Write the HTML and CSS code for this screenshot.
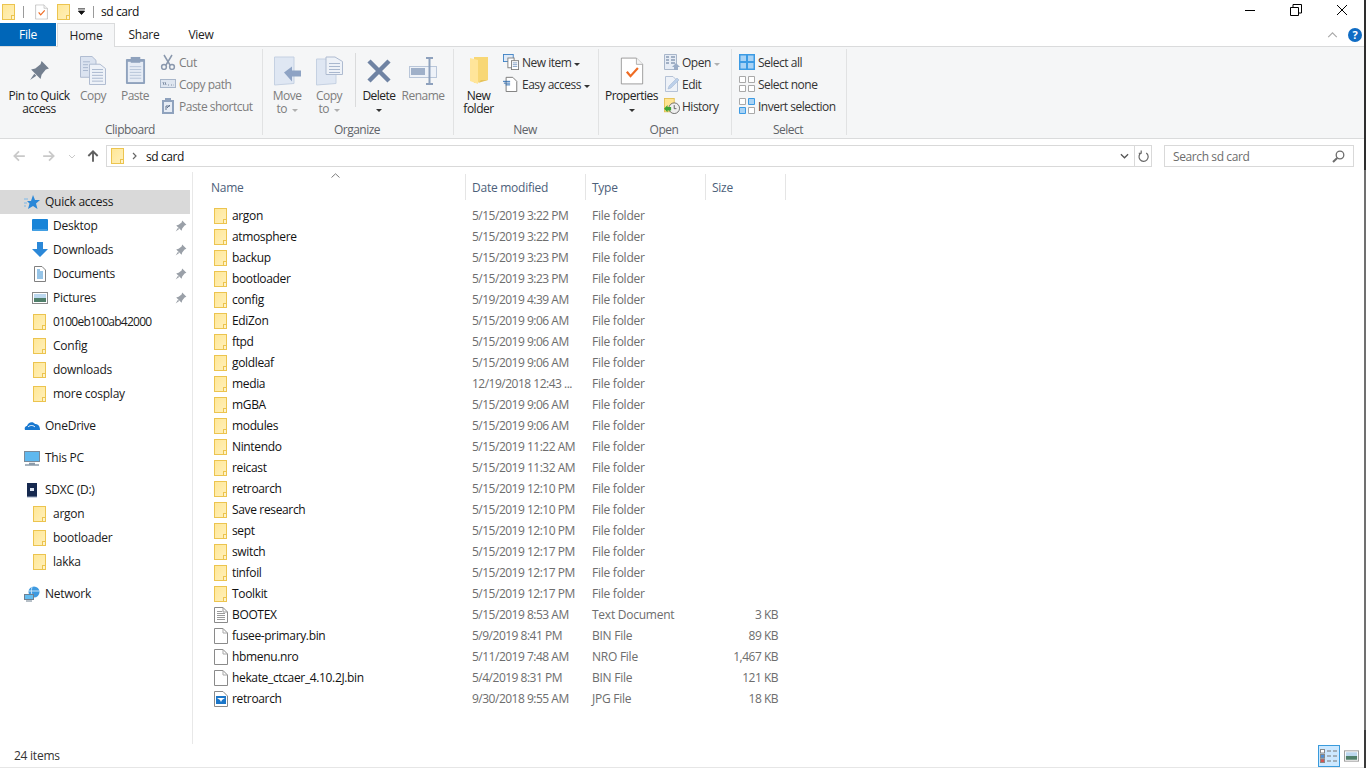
FILE: index.html
```html
<!DOCTYPE html>
<html lang="en">
<head>
<meta charset="utf-8">
<title>sd card</title>
<link rel="stylesheet" href="styles.css">
</head>
<body>
<svg class="defs" width="0" height="0" aria-hidden="true">
  <linearGradient id="fg" x1="0" y1="0" x2="1" y2="1">
    <stop offset="0" stop-color="#ffe796"/>
    <stop offset="1" stop-color="#fff0bc"/>
  </linearGradient>
  <symbol id="folder" viewBox="0 0 16 16">
    <rect x="1.500" y="0.500" width="12" height="15" fill="url(#fg)" stroke="#ecc44f"/>
    <rect x="10.500" y="11.500" width="3" height="4" fill="#fff3c8" stroke="#ecc44f"/>
  </symbol>
  <symbol id="file" viewBox="0 0 16 16">
    <path d="M1.500 .5H10L14.500 5V15.500H1.500Z" fill="#fff" stroke="#8a8a8a"/>
    <path d="M10 .5V5H14.500" fill="none" stroke="#a8a8a8"/>
  </symbol>
  <symbol id="textfile" viewBox="0 0 16 16">
    <path d="M1.500 .5H10L14.500 5V15.500H1.500Z" fill="#fff" stroke="#8a8a8a"/>
    <path d="M10 .5V5H14.500M4 4.500H9M4 6.500H12M4 8.500H12M4 10.500H12M4 12.500H12" fill="none" stroke="#9a9a9a"/>
  </symbol>
  <symbol id="jpg" viewBox="0 0 16 16">
    <path d="M1.500 .5H10L14.500 5V15.500H1.500Z" fill="#fff" stroke="#8a8a8a"/>
    <rect x="3" y="5" width="10" height="8" fill="#1b76c8"/>
    <path d="M4 7H12L9 9 8 11 7 9Z" fill="#fff"/>
  </symbol>
  <symbol id="pin" viewBox="0 0 20 20">
    <path d="M12 1 19 8 16 9 12 14 11 18 2 9 6 8 11 4Z" fill="currentColor"/>
    <path d="M5 13 1 19 7 15Z" fill="currentColor"/>
  </symbol>
  <symbol id="check" viewBox="0 0 32 38">
    <path d="M1.500 1.500H22L30.500 10V36.500H1.500Z" fill="#fff" stroke="#7c7c7c"/>
    <path d="M22 1.500V10H30.500" fill="#f3f3f3" stroke="#9a9a9a"/>
    <path d="M9 20 14 26 24 15" fill="none" stroke="#ef6c24" stroke-width="3"/>
  </symbol>
  <symbol id="docs" viewBox="0 0 26 30">
    <path d="M.5 .5H12L16 4.500V22H.5Z" fill="#dbe3f0" stroke="#aebbd0"/>
    <path d="M9.500 8.500H20L25.500 13V29.500H9.500Z" fill="#eef2f8" stroke="#aebbd0"/>
    <path d="M12 14H23M12 17H23M12 20H23M12 23H23M12 26H23M3 6H10M3 9H8M3 12H8M3 15H8" stroke="#a9b8cf"/>
  </symbol>
</svg>

<div class="window">
  <header class="titlebar">
    <svg class="ic16 t-folder"><use href="#folder"/></svg>
    <span class="t-sep"></span>
    <svg class="t-check" viewBox="0 0 32 38"><use href="#check"/></svg>
    <svg class="ic16 t-folder2"><use href="#folder"/></svg>
    <svg class="t-more" viewBox="0 0 8 7"><path d="M0 .5H8M.5 3 4 7 7.500 3Z" stroke="#111" fill="#111"/></svg>
    <span class="t-sep"></span>
    <span class="title">sd card</span>
    <div class="winctl">
      <svg viewBox="0 0 12 12"><path d="M1 6.500H11" stroke="#000"/></svg>
      <svg viewBox="0 0 12 12"><path d="M.5 3.500H8.500V11.500H.5ZM3 3V.5H11.500V9H9" fill="none" stroke="#000"/></svg>
      <svg viewBox="0 0 12 12"><path d="M1 1 11 11M11 1 1 11" stroke="#000"/></svg>
    </div>
  </header>

  <nav class="tabs">
    <span class="tab tab-file">File</span>
    <span class="tab tab-home">Home</span>
    <span class="tab tab-share">Share</span>
    <span class="tab tab-view">View</span>
    <svg class="collapse" viewBox="0 0 12 7"><path d="M1 6 6 1 11 6" fill="none" stroke="#a8a8a8" stroke-width="1.300"/></svg>
    <span class="help">?</span>
  </nav>

  <section class="ribbon">
    <div class="group g-clip">
      <div class="g-body">
        <div class="big w-pin"><span class="big-ic"><svg class="i-pin" viewBox="0 0 20 20"><use href="#pin"/></svg></span><span>Pin to Quick<br>access</span></div>
        <div class="big w-copy off"><span class="big-ic"><svg class="i-docs" viewBox="0 0 26 30" preserveAspectRatio="none"><use href="#docs"/></svg></span><span>Copy</span></div>
        <div class="big w-paste off"><span class="big-ic"><svg class="i-paste" viewBox="0 0 22 30" preserveAspectRatio="none"><rect x="1" y="3" width="20" height="26" rx="1" fill="#8fa2bd"/><rect x="3" y="6" width="16" height="21" fill="#e6ecf5"/><rect x="6" y="1" width="10" height="6" fill="#8fa2bd"/><path d="M5 11H17M5 14H17M5 17H17M5 20H17M5 23H17" stroke="#b7c4d8"/></svg></span><span>Paste</span></div>
        <div class="smalls off">
          <div class="small"><svg class="i16" viewBox="0 0 16 16"><path d="M4 1 10 11M12 1 6 11" stroke="#8a98ad" stroke-width="1.500" fill="none"/><circle cx="4" cy="13" r="2.400" fill="none" stroke="#8a98ad" stroke-width="1.500"/><circle cx="12" cy="13" r="2.400" fill="none" stroke="#8a98ad" stroke-width="1.500"/></svg><span>Cut</span></div>
          <div class="small"><svg class="i16" viewBox="0 0 16 16"><rect x=".5" y="3.500" width="15" height="8" fill="#dfe6f0" stroke="#a8b6ca"/><path d="M3 6 4 9M5 6 6 9M8 9H9M11 9H12M13.500 9H14" stroke="#7f8ea5"/></svg><span>Copy path</span></div>
          <div class="small"><svg class="i16" viewBox="0 0 16 16"><rect x="2" y="2" width="12" height="14" fill="#8fa2bd"/><rect x="4" y="4" width="8" height="10" fill="#e6ecf5"/><rect x="5" y="0" width="6" height="3" fill="#8fa2bd"/><path d="M6 12V8H10M7 10 10 7" stroke="#62748f" fill="none"/></svg><span>Paste shortcut</span></div>
        </div>
      </div>
      <div class="g-label">Clipboard</div>
    </div>

    <div class="group g-org">
      <div class="g-body">
        <div class="big w-move off"><span class="big-ic"><svg class="i-move" viewBox="0 0 27 29"><path d="M.5.5H20V27L.5 28.500Z" fill="#dfe7f3" stroke="#c5d1e2"/><path d="M10 16 18 10V14H27V20H18V25Z" fill="#8ea3c4"/></svg></span><span>Move<br>to <i class="caret-g"></i></span></div>
        <div class="big w-copyto off"><span class="big-ic"><svg class="i-move" viewBox="0 0 27 29"><path d="M.5 2.500H20V27L.5 28.500Z" fill="#dfe7f3" stroke="#c5d1e2"/><path d="M10 .5H19L26.500 5V18H10Z" fill="#eef2f8" stroke="#aebbd0"/><path d="M13 7H24M13 10H24M13 13H24M13 16H24" stroke="#a9b8cf"/></svg></span><span>Copy<br>to <i class="caret-g"></i></span></div>
        <span class="vsep"></span>
        <div class="big w-del"><span class="big-ic"><svg class="i-del" viewBox="0 0 26 26"><path d="M3 3 23 23M23 3 3 23" stroke="#6f83a3" stroke-width="4.500"/></svg></span><span>Delete<br><i class="caret"></i></span></div>
        <div class="big w-ren off"><span class="big-ic"><svg class="i-ren" viewBox="0 0 28 28"><rect x=".5" y="9.500" width="27" height="11" fill="#eef2f8" stroke="#b9c6d9"/><rect x="2" y="11" width="14" height="7" fill="#9fb0c9"/><path d="M17 1H24M20.500 1V27M17 27H24" stroke="#8ea1bd" stroke-width="2" fill="none"/></svg></span><span>Rename</span></div>
      </div>
      <div class="g-label">Organize</div>
    </div>

    <div class="group g-new">
      <div class="g-body">
        <div class="big w-newf"><span class="big-ic"><svg class="i-newf" viewBox="0 0 20 28"><path d="M5 0H19V23L5 26Z" fill="#f8d775"/><path d="M1 1 9 3V27L1 24Z" fill="#ffe59a"/><path d="M9 26 19 23H12Z" fill="#e6c35c"/></svg></span><span>New<br>folder</span></div>
        <div class="smalls s-new">
          <div class="small"><svg class="i16" viewBox="0 0 18 18"><rect x=".5" y=".5" width="11" height="8" fill="#dfeaf7" stroke="#3b7fc4"/><rect x="5.500" y="4.500" width="7" height="11" fill="#fff" stroke="#7c7c7c"/><rect x="9.500" y="7.500" width="8" height="10" fill="#fff" stroke="#7c7c7c"/><path d="M11 10H16M11 12H16M11 14H16" stroke="#7c9ac0"/></svg><span>New item<i class="caret c-side"></i></span></div>
          <div class="small"><svg class="i16" viewBox="0 0 18 18"><path d="M3.500 1.500H11L15.500 6V17.500H3.500Z" fill="#fff" stroke="#6f6f6f"/><path d="M0 6H8M1 8H8M3 10H8" stroke="#1f63ae"/></svg><span>Easy access<i class="caret c-side"></i></span></div>
        </div>
      </div>
      <div class="g-label">New</div>
    </div>

    <div class="group g-open">
      <div class="g-body">
        <div class="big w-prop"><span class="big-ic"><svg class="i-prop" viewBox="0 0 32 38"><use href="#check"/></svg></span><span>Properties<br><i class="caret"></i></span></div>
        <div class="smalls s-open">
          <div class="small off"><svg class="i16" viewBox="0 0 16 16"><path d="M.5 .5H12.500V15.500H.5Z" fill="#e6ecf5" stroke="#a8b6ca"/><path d="M2 3H5M2 6H5M2 9H5M7 3H11M7 6H11M7 9H11" stroke="#8b9cb5" stroke-width="1.500"/><path d="M8 13 12 9 16 13H14V16H10V13Z" fill="#9aacc6"/></svg><span>Open<i class="caret-g c-side"></i></span></div>
          <div class="small off"><svg class="i16" viewBox="0 0 16 16"><path d="M1.500 .5H9L13.500 5V15.500H1.500Z" fill="#eef2f8" stroke="#b5c2d6"/><path d="M4 13 5 10 13 2 15 4 7 12Z" fill="#bcd0ea" stroke="#9fb3cf" stroke-width=".5"/></svg><span>Edit</span></div>
          <div class="small"><svg class="i16" viewBox="0 0 18 18"><rect x=".5" y=".5" width="11" height="15" fill="#ffe492" stroke="#e3bf4f"/><circle cx="11.500" cy="11.500" r="6" fill="#eee" stroke="#666"/><path d="M11.500 8V12H14" fill="none" stroke="#555"/><path d="M0 12 4 8V10H8V14H4V16Z" fill="#3fa535"/></svg><span>History</span></div>
        </div>
      </div>
      <div class="g-label">Open</div>
    </div>

    <div class="group g-sel">
      <div class="g-body">
        <div class="smalls s-sel">
          <div class="small"><svg class="i16" viewBox="0 0 16 16"><rect width="16" height="16" fill="#3c9be4"/><path d="M1.500 1.500H7V7H1.500ZM9 1.500H14.500V7H9ZM1.500 9H7V14.500H1.500ZM9 9H14.500V14.500H9Z" fill="#a9d3f5"/></svg><span>Select all</span></div>
          <div class="small"><svg class="i16" viewBox="0 0 16 16"><path d="M.5 .5H6.500V6.500H.5ZM9.500 .5H15.500V6.500H9.500ZM.5 9.500H6.500V15.500H.5ZM9.500 9.500H15.500V15.500H9.500Z" fill="#fff" stroke="#a9a9a9"/></svg><span>Select none</span></div>
          <div class="small"><svg class="i16" viewBox="0 0 16 16"><path d="M.5 .5H6.500V6.500H.5ZM9.500 9.500H15.500V15.500H9.500Z" fill="#fff" stroke="#a9a9a9"/><path d="M9.500 .5H15.500V6.500H9.500ZM.5 9.500H6.500V15.500H.5Z" fill="#a9d3f5" stroke="#3c9be4"/></svg><span>Invert selection</span></div>
        </div>
      </div>
      <div class="g-label">Select</div>
    </div>
  </section>

  <div class="addrrow">
    <svg class="nav n-back" viewBox="0 0 12 12"><path d="M11 6H2M6 2 2 6 6 10" fill="none" stroke="#c9c9c9" stroke-width="1.500"/></svg>
    <svg class="nav n-fwd" viewBox="0 0 12 12"><path d="M1 6H10M6 2 10 6 6 10" fill="none" stroke="#c9c9c9" stroke-width="1.500"/></svg>
    <svg class="n-down" viewBox="0 0 8 5"><path d="M1 1 4 4 7 1" fill="none" stroke="#c9c9c9"/></svg>
    <svg class="nav n-up" viewBox="0 0 12 12"><path d="M6 11V2M2 6 6 2 10 6" fill="none" stroke="#5f5f5f" stroke-width="1.600"/></svg>
    <div class="addr">
      <svg class="ic16 addr-f"><use href="#folder"/></svg>
      <svg class="addr-sep" viewBox="0 0 5 8"><path d="M1 1 4 4 1 7" fill="none" stroke="#666" stroke-width="1.200"/></svg>
      <span class="addr-t">sd card</span>
      <svg class="addr-dd" viewBox="0 0 10 6"><path d="M1 1 5 5 9 1" fill="none" stroke="#555" stroke-width="1.400"/></svg>
      <span class="addr-btn"><svg viewBox="0 0 12 13"><path d="M3.500 3A5 5 0 1 0 9 3.200M3.500 .5V3.500H.8" fill="none" stroke="#666" stroke-width="1.300"/></svg></span>
    </div>
    <div class="search">
      <span>Search sd card</span>
      <svg viewBox="0 0 13 13"><circle cx="8" cy="5" r="3.800" fill="none" stroke="#6d6d6d" stroke-width="1.300"/><path d="M5.200 8 1 12" stroke="#6d6d6d" stroke-width="2"/></svg>
    </div>
  </div>

  <main class="main">
    <aside class="side">
      <div class="s-row s-root s-active"><svg class="s-ic" viewBox="0 0 16 16"><path d="M9 1 11 6H16L12 9.500 13.500 15 9 12 4 15 5.500 9.500 3 7H7Z" fill="#2b88d8"/><path d="M0 5H4M0 9H3M0 12H2" stroke="#7db8e8"/></svg><span>Quick access</span></div>
      <div class="s-row s-child"><svg class="s-ic" viewBox="0 0 16 16"><rect y="1" width="16" height="12" rx="1" fill="#1884d8"/><path d="M1 12H15" stroke="#6db9ee"/></svg><span>Desktop</span><svg class="s-pin" viewBox="0 0 20 20"><use href="#pin"/></svg></div>
      <div class="s-row s-child"><svg class="s-ic" viewBox="0 0 16 16"><path d="M5 0H11V7H16L8 15 0 7H5Z" fill="#2b88d8"/></svg><span>Downloads</span><svg class="s-pin" viewBox="0 0 20 20"><use href="#pin"/></svg></div>
      <div class="s-row s-child"><svg class="s-ic" viewBox="0 0 16 16"><path d="M2.500 .5H10L13.500 4V15.500H2.500Z" fill="#fff" stroke="#808080"/><path d="M5 4H8M5 6H11M5 8H11M5 10H11M5 12H11" stroke="#2e8ad0"/></svg><span>Documents</span><svg class="s-pin" viewBox="0 0 20 20"><use href="#pin"/></svg></div>
      <div class="s-row s-child"><svg class="s-ic" viewBox="0 0 16 16"><rect x=".5" y="2.500" width="15" height="11" fill="#fff" stroke="#8a8a8a"/><rect x="2" y="4" width="12" height="4" fill="#bcd8ef"/><rect x="2" y="8" width="12" height="4" fill="#4f7f6a"/></svg><span>Pictures</span><svg class="s-pin" viewBox="0 0 20 20"><use href="#pin"/></svg></div>
      <div class="s-row s-child"><svg class="s-ic"><use href="#folder"/></svg><span class="tight">0100eb100ab42000</span></div>
      <div class="s-row s-child"><svg class="s-ic"><use href="#folder"/></svg><span>Config</span></div>
      <div class="s-row s-child"><svg class="s-ic"><use href="#folder"/></svg><span>downloads</span></div>
      <div class="s-row s-child"><svg class="s-ic"><use href="#folder"/></svg><span>more cosplay</span></div>
      <div class="s-row s-root s-gap"><svg class="s-ic" viewBox="0 0 16 16"><path d="M1 12C0 9 2 8 3 8 4 4 9 3 11 6 14 6 16 8 16 12Z" fill="#1878d0"/><path d="M4 9C6 7 9 7 11 9" stroke="#fff" fill="none"/></svg><span>OneDrive</span></div>
      <div class="s-row s-root s-gap"><svg class="s-ic" viewBox="0 0 16 16"><rect x=".5" y="1.500" width="15" height="10" fill="#5fb8ee" stroke="#7a8a99"/><path d="M5 13.500H11M1 15H15" stroke="#8a9aa9" stroke-width="1.300"/></svg><span>This PC</span></div>
      <div class="s-row s-root s-gap"><svg class="s-ic" viewBox="0 0 16 16"><rect x="3" y="1" width="10" height="14" fill="#16294f"/><rect x="6" y="6" width="4" height="3" fill="#dbe3f0"/><path d="M3 15H13" stroke="#9aa8c0"/></svg><span>SDXC (D:)</span></div>
      <div class="s-row s-child"><svg class="s-ic"><use href="#folder"/></svg><span>argon</span></div>
      <div class="s-row s-child"><svg class="s-ic"><use href="#folder"/></svg><span>bootloader</span></div>
      <div class="s-row s-child"><svg class="s-ic"><use href="#folder"/></svg><span>lakka</span></div>
      <div class="s-row s-root s-gap"><svg class="s-ic" viewBox="0 0 16 16"><circle cx="10" cy="6" r="5.500" fill="#3f9ae0"/><path d="M8 1C7 4 7 8 9 11M5 5H15" stroke="#c7e3f8" fill="none"/><rect x=".5" y="8.500" width="9" height="5" fill="#64bdf0" stroke="#6f8090"/><path d="M2 15H8" stroke="#6f8090"/></svg><span>Network</span></div>
    </aside>

    <div class="list">
      <div class="sort-arrow"><svg viewBox="0 0 9 5"><path d="M.5 4.500 4.500 .8 8.500 4.500" fill="none" stroke="#7c7c7c"/></svg></div>
      <div class="head">
        <span class="h-name">Name</span>
        <span>Date modified</span>
        <span>Type</span>
        <span>Size</span>
      </div>
      <div class="rows">
        <div class="row"><span class="n"><svg class="ic16"><use href="#folder"/></svg>argon</span><span class="d">5/15/2019 3:22 PM</span><span>File folder</span><span class="sz"></span></div>
        <div class="row"><span class="n"><svg class="ic16"><use href="#folder"/></svg>atmosphere</span><span class="d">5/15/2019 3:22 PM</span><span>File folder</span><span class="sz"></span></div>
        <div class="row"><span class="n"><svg class="ic16"><use href="#folder"/></svg>backup</span><span class="d">5/15/2019 3:23 PM</span><span>File folder</span><span class="sz"></span></div>
        <div class="row"><span class="n"><svg class="ic16"><use href="#folder"/></svg>bootloader</span><span class="d">5/15/2019 3:23 PM</span><span>File folder</span><span class="sz"></span></div>
        <div class="row"><span class="n"><svg class="ic16"><use href="#folder"/></svg>config</span><span class="d">5/19/2019 4:39 AM</span><span>File folder</span><span class="sz"></span></div>
        <div class="row"><span class="n"><svg class="ic16"><use href="#folder"/></svg>EdiZon</span><span class="d">5/15/2019 9:06 AM</span><span>File folder</span><span class="sz"></span></div>
        <div class="row"><span class="n"><svg class="ic16"><use href="#folder"/></svg>ftpd</span><span class="d">5/15/2019 9:06 AM</span><span>File folder</span><span class="sz"></span></div>
        <div class="row"><span class="n"><svg class="ic16"><use href="#folder"/></svg>goldleaf</span><span class="d">5/15/2019 9:06 AM</span><span>File folder</span><span class="sz"></span></div>
        <div class="row"><span class="n"><svg class="ic16"><use href="#folder"/></svg>media</span><span class="d">12/19/2018 12:43 ...</span><span>File folder</span><span class="sz"></span></div>
        <div class="row"><span class="n"><svg class="ic16"><use href="#folder"/></svg>mGBA</span><span class="d">5/15/2019 9:06 AM</span><span>File folder</span><span class="sz"></span></div>
        <div class="row"><span class="n"><svg class="ic16"><use href="#folder"/></svg>modules</span><span class="d">5/15/2019 9:06 AM</span><span>File folder</span><span class="sz"></span></div>
        <div class="row"><span class="n"><svg class="ic16"><use href="#folder"/></svg>Nintendo</span><span class="d">5/15/2019 11:22 AM</span><span>File folder</span><span class="sz"></span></div>
        <div class="row"><span class="n"><svg class="ic16"><use href="#folder"/></svg>reicast</span><span class="d">5/15/2019 11:32 AM</span><span>File folder</span><span class="sz"></span></div>
        <div class="row"><span class="n"><svg class="ic16"><use href="#folder"/></svg>retroarch</span><span class="d">5/15/2019 12:10 PM</span><span>File folder</span><span class="sz"></span></div>
        <div class="row"><span class="n"><svg class="ic16"><use href="#folder"/></svg>Save research</span><span class="d">5/15/2019 12:10 PM</span><span>File folder</span><span class="sz"></span></div>
        <div class="row"><span class="n"><svg class="ic16"><use href="#folder"/></svg>sept</span><span class="d">5/15/2019 12:10 PM</span><span>File folder</span><span class="sz"></span></div>
        <div class="row"><span class="n"><svg class="ic16"><use href="#folder"/></svg>switch</span><span class="d">5/15/2019 12:17 PM</span><span>File folder</span><span class="sz"></span></div>
        <div class="row"><span class="n"><svg class="ic16"><use href="#folder"/></svg>tinfoil</span><span class="d">5/15/2019 12:17 PM</span><span>File folder</span><span class="sz"></span></div>
        <div class="row"><span class="n"><svg class="ic16"><use href="#folder"/></svg>Toolkit</span><span class="d">5/15/2019 12:17 PM</span><span>File folder</span><span class="sz"></span></div>
        <div class="row"><span class="n"><svg class="ic16"><use href="#textfile"/></svg>BOOTEX</span><span class="d">5/15/2019 8:53 AM</span><span>Text Document</span><span class="sz">3 KB</span></div>
        <div class="row"><span class="n"><svg class="ic16"><use href="#file"/></svg>fusee-primary.bin</span><span class="d">5/9/2019 8:41 PM</span><span>BIN File</span><span class="sz">89 KB</span></div>
        <div class="row"><span class="n"><svg class="ic16"><use href="#file"/></svg>hbmenu.nro</span><span class="d">5/11/2019 7:48 AM</span><span>NRO File</span><span class="sz">1,467 KB</span></div>
        <div class="row"><span class="n"><svg class="ic16"><use href="#file"/></svg>hekate_ctcaer_4.10.2J.bin</span><span class="d">5/4/2019 8:31 PM</span><span>BIN File</span><span class="sz">121 KB</span></div>
        <div class="row"><span class="n"><svg class="ic16"><use href="#jpg"/></svg>retroarch</span><span class="d">9/30/2018 9:55 AM</span><span>JPG File</span><span class="sz">18 KB</span></div>
      </div>
    </div>
  </main>

  <footer class="status">
    <span class="count">24 items</span>
    <div class="views">
      <span class="v-on"><svg viewBox="0 0 18 14"><rect x=".5" y=".5" width="4" height="3.500" fill="#fff" stroke="#888"/><rect x=".5" y="5.500" width="4" height="3.500" fill="#4a90d9" stroke="#888"/><rect x=".5" y="10" width="4" height="3.500" fill="#d9534f" stroke="#888"/><path d="M7 2H11M13 2H17M7 7H11M13 7H17M7 12H11M13 12H17" stroke="#777"/></svg></span>
      <span class="v-off"><svg viewBox="0 0 16 12"><rect x=".5" y=".5" width="15" height="11" fill="#fff" stroke="#999"/><rect x="2" y="2" width="12" height="4" fill="#bcd8ef"/><rect x="2" y="6" width="12" height="4" fill="#4f7f6a"/></svg></span>
    </div>
  </footer>
</div>
<div class="edge"></div>
</body>
</html>
```

FILE: styles.css
```css
* { box-sizing: border-box; }
html, body { margin: 0; height: 100%; overflow: hidden; }
body { display: flex; background: #fff; font-family: "Open Sans", "Noto Sans", sans-serif; font-size: 12px; color: #1a1a1a; letter-spacing: -0.25px; }
.defs { position: absolute; }
svg { display: block; flex: none; }
.ic16 { width: 16px; height: 16px; }
i { font-style: normal; }

.window { width: 1364px; height: 768px; flex: none; display: flex; flex-direction: column; }
.edge { width: 2px; height: 768px; flex: none; background: linear-gradient(#2e2e2e 0, #2e2e2e 170px, #707070 170px, #707070 730px, #3a3a3a 730px); }

/* Title bar */
.titlebar { height: 23px; display: flex; align-items: center; flex: none; }
.t-folder { margin-left: 1px; }
.t-sep { width: 1px; height: 12px; background: #9a9a9a; margin-left: 6px; }
.t-check { width: 13px; height: 16px; margin-left: 11px; }
.t-folder2 { margin-left: 8px; }
.t-more { width: 7px; height: 7px; margin-left: 6px; }
.t-more + .t-sep { margin-left: 8px; }
.title { margin-left: 7px; color: #111; letter-spacing: -0.4px; }
.winctl { margin-left: auto; display: flex; gap: 34px; padding-right: 16px; padding-bottom: 3px; }
.winctl svg { width: 12px; height: 12px; }

/* Tabs */
.tabs { height: 24px; display: flex; align-items: stretch; flex: none; border-bottom: 1px solid #dadbdc; }
.tab { display: flex; align-items: center; justify-content: center; color: #222; }
.tab-file { width: 56px; background: #0066b8; color: #fff; }
.tab-home { width: 58px; margin-left: 1px; margin-bottom: -1px; background: #f5f6f7; border: 1px solid #dadbdc; border-bottom: 0; }
.tab-share { width: 58px; }
.tab-view { width: 56px; }
.collapse { width: 11px; height: 6px; margin-left: auto; align-self: center; }
.help { width: 14px; height: 14px; border-radius: 50%; background: #0f6cc4; color: #fff; font-weight: 700; font-size: 11px; display: flex; align-items: center; justify-content: center; align-self: center; margin: 0 2px 0 10px; }

/* Ribbon */
.ribbon { height: 92px; flex: none; background: #f5f6f7; border-bottom: 1px solid #dadbdc; display: flex; letter-spacing: -0.5px; }
.group { display: flex; flex-direction: column; margin: 2px 0 3px; border-right: 1px solid #e1e2e3; color: #333; }
.g-clip { width: 263px; }
.g-org { width: 191px; }
.g-new { width: 145px; }
.g-open { width: 133px; }
.g-sel { width: 115px; }
.g-body { flex: 1; display: flex; min-height: 0; }
.g-label { height: 14px; flex: none; text-align: center; line-height: 14px; padding-right: 2px; margin-bottom: -2px; color: #5f6368; }
.g-clip .g-body { padding-left: 8px; }
.big { display: flex; flex-direction: column; align-items: center; text-align: center; line-height: 13px; padding-top: 3px; color: #222; white-space: nowrap; }
.big-ic { height: 37px; display: flex; align-items: center; justify-content: center; flex: none; }
.off, .off .small { color: #7d7d7d; }
.w-pin { width: 62px; }
.i-pin { width: 21px; height: 21px; color: #737f8f; }
.i-docs { width: 26px; height: 29px; }
.i-paste { width: 21px; height: 29px; }
.w-copy { width: 46px; }
.w-paste { width: 38px; }
.smalls { display: flex; flex-direction: column; margin-left: 6px; padding-top: 2px; }
.small { height: 22px; display: flex; align-items: center; gap: 3px; color: #333; white-space: nowrap; }
.i16 { width: 16px; height: 16px; }
.w-move { width: 48px; }
.w-copyto { width: 36px; }
.i-move { width: 27px; height: 30px; }
.vsep { width: 1px; height: 54px; background: #dadbdc; margin: 4px 0 0 8px; }
.w-del { width: 46px; }
.w-ren { width: 42px; }
.i-del { width: 26px; height: 26px; }
.i-ren { width: 28px; height: 28px; }
.w-newf { width: 49px; }
.i-newf { width: 20px; height: 28px; }
.s-new { margin-left: 0; }
.w-prop { width: 65px; }
.i-prop { width: 24px; height: 28px; }
.s-open { margin-left: 0; }
.s-open .small { gap: 2px; }
.s-sel { margin-left: 7px; }
.caret, .caret-g { display: inline-block; width: 0; height: 0; border-left: 3px solid transparent; border-right: 3px solid transparent; border-top: 3px solid #333; vertical-align: 1px; }
.caret-g { border-top-color: #b0b0b0; margin-left: 2px; }
.c-side { margin-left: 3px; }

/* Address row */
.addrrow { height: 33px; flex: none; display: flex; align-items: center; padding-top: 1px; }
.nav { width: 14px; height: 14px; }
.n-back { margin-left: 12px; }
.n-fwd { margin-left: 16px; }
.n-down { width: 8px; height: 5px; margin-left: 12px; }
.n-up { margin-left: 10px; }
.addr { width: 1046px; height: 22px; margin-left: 6px; border: 1px solid #d9d9d9; display: flex; align-items: center; }
.addr-f { margin-left: 3px; }
.addr-sep { width: 5px; height: 8px; margin-left: 6px; }
.addr-t { margin-left: 9px; color: #111; letter-spacing: -0.4px; }
.addr-dd { width: 9px; height: 6px; margin-left: auto; margin-right: 2px; }
.addr-btn { width: 17px; height: 20px; border-left: 1px solid #d9d9d9; margin-left: 3px; display: flex; align-items: center; justify-content: center; }
.addr-btn svg { width: 11px; height: 12px; }
.search { width: 190px; height: 22px; margin-left: 12px; border: 1px solid #d9d9d9; display: flex; align-items: center; justify-content: space-between; padding: 0 8px; color: #6d6d6d; letter-spacing: -0.4px; }
.search svg { width: 13px; height: 13px; }

/* Main */
.main { flex: 1; display: flex; min-height: 0; }
.side { width: 193px; flex: none; border-right: 1px solid #e8e8e8; padding-top: 18px; display: flex; flex-direction: column; }
.s-row { height: 24px; width: 190px; flex: none; display: flex; align-items: center; color: #1a1a1a; }
.s-row > span { padding-bottom: 1px; }
.s-active { background: #d9d9d9; }
.s-root { padding-left: 24px; gap: 5px; }
.s-child { padding-left: 32px; gap: 5px; }
.s-gap { margin-top: 8px; }
.s-ic { width: 16px; height: 16px; }
.s-pin { width: 12px; height: 12px; margin-left: auto; margin-right: 3px; color: #9aa0a8; }
.tight { letter-spacing: -0.75px; }

.list { flex: 1; position: relative; padding-left: 18px; }
.sort-arrow { position: absolute; left: 138px; top: 1px; }
.sort-arrow svg { width: 9px; height: 5px; }
.head { display: grid; grid-template-columns: 255px 120px 120px 80px; height: 26px; margin-top: 2px; color: #4c607a; }
.head span { display: flex; align-items: center; padding-left: 6px; border-right: 1px solid #e5e5e5; }
.head .h-name { padding-left: 0; }
.rows { padding-top: 5px; }
.row { display: grid; grid-template-columns: 255px 120px 120px 72px; height: 21px; align-items: center; color: #6d6d6d; white-space: nowrap; }
.row > span:nth-child(2), .row > span:nth-child(3) { padding-left: 6px; }
.n { display: flex; align-items: center; gap: 3px; color: #111; padding-left: 2px; letter-spacing: -0.35px; }
.row .d { letter-spacing: -0.5px; }
.sz { text-align: right; letter-spacing: -0.5px; }

/* Status */
.status { height: 24px; flex: none; display: flex; align-items: center; justify-content: space-between; padding-left: 14px; color: #333; border-bottom: 1px solid #e6e6e6; }
.count { padding-bottom: 1px; }
.views { display: flex; align-items: center; }
.v-on { width: 22px; height: 22px; background: #cce8ff; border: 1px solid #3a9bdc; display: flex; align-items: center; justify-content: center; }
.v-on svg { width: 18px; height: 14px; }
.v-off { width: 22px; height: 21px; display: flex; align-items: center; justify-content: center; margin-right: 2px; }
.v-off svg { width: 15px; height: 12px; }
```
